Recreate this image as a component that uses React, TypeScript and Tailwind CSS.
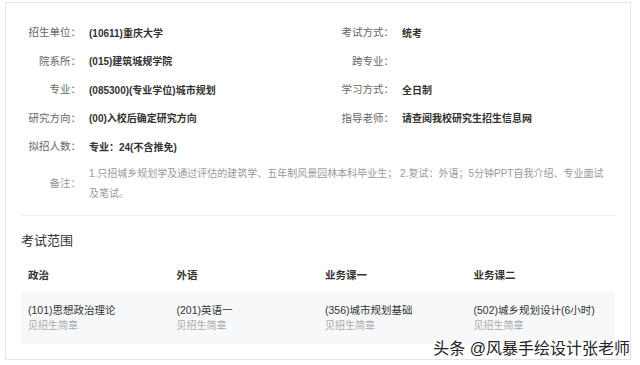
import React from "react";

const font = "font-['Liberation_Sans','Noto_Sans_CJK_SC',sans-serif]";

const leftRows = [
  { label: "招生单位：", value: "(10611)重庆大学" },
  { label: "院系所：", value: "(015)建筑城规学院" },
  { label: "专业：", value: "(085300)(专业学位)城市规划" },
  { label: "研究方向：", value: "(00)入校后确定研究方向" },
  { label: "拟招人数：", value: "专业：24(不含推免)" },
];

const rightRows = [
  { label: "考试方式：", value: "统考" },
  { label: "跨专业：", value: "" },
  { label: "学习方式：", value: "全日制" },
  { label: "指导老师：", value: "请查阅我校研究生招生信息网" },
];

const subjects = [
  { title: "政治", name: "(101)思想政治理论" },
  { title: "外语", name: "(201)英语一" },
  { title: "业务课一", name: "(356)城市规划基础" },
  { title: "业务课二", name: "(502)城乡规划设计(6小时)" },
];

function InfoRow({ label, value }: { label: string; value: string }) {
  return (
    <div className="flex h-[28.5px] items-center">
      <span className="w-[60px] shrink-0 text-right text-[#666]">{label}</span>
      <span className="ml-[8px] text-[10px] font-bold text-[#333]">{value}</span>
    </div>
  );
}

export default function App() {
  return (
    <div className={`relative h-[365px] w-[640px] overflow-hidden bg-white ${font}`}>
      <div className="ml-[5px] mt-[2px] h-[358px] w-[626px] border border-[#e4e4e4] px-[15px] pt-[16px]">
        {/* Info */}
        <div className="border-b border-[#eeeeee] pb-[11px] text-[10.5px]">
          <div className="grid grid-cols-[313px_1fr]">
            <div>
              {leftRows.map((r) => (
                <InfoRow key={r.label} {...r} />
              ))}
            </div>
            <div>
              {rightRows.map((r) => (
                <InfoRow key={r.label} {...r} />
              ))}
            </div>
          </div>
          <div className="mt-[2.5px] flex items-center">
            <span className="w-[60px] shrink-0 text-right text-[#999]">备注：</span>
            <p className="ml-[8px] w-[522px] text-[10px] leading-[20px] text-[#999]">
              1.只招城乡规划学及通过评估的建筑学、五年制风景园林本科毕业生； 2.复试：外语；5分钟PPT自我介绍、专业面试及笔试。
            </p>
          </div>
        </div>

        {/* Exam scope */}
        <h3 className="mt-[15px] text-[13px] leading-[20px] text-[#333]">考试范围</h3>
        <div className="mt-[8px]">
          <div className="grid h-[33px] grid-cols-4 items-center text-[10.5px] font-bold text-[#333]">
            {subjects.map((s) => (
              <div key={s.title} className="pl-[7px]">
                {s.title}
              </div>
            ))}
          </div>
          <div className="grid grid-cols-4 bg-[#f7f8fa] py-[11px]">
            {subjects.map((s) => (
              <div key={s.title} className="pl-[7px]">
                <div className="text-[10.5px] leading-[15px] text-[#333]">{s.name}</div>
                <div className="text-[10px] leading-[15px] text-[#aaa]">见招生简章</div>
              </div>
            ))}
          </div>
        </div>
      </div>

      {/* watermark */}
      <div className="absolute bottom-[5px] right-[10px] text-[16px] leading-[22px] text-[#222] [text-shadow:0_0_2px_#fff,0_0_2px_#fff,0_0_3px_#fff]">
        头条 @风暴手绘设计张老师
      </div>
    </div>
  );
}
